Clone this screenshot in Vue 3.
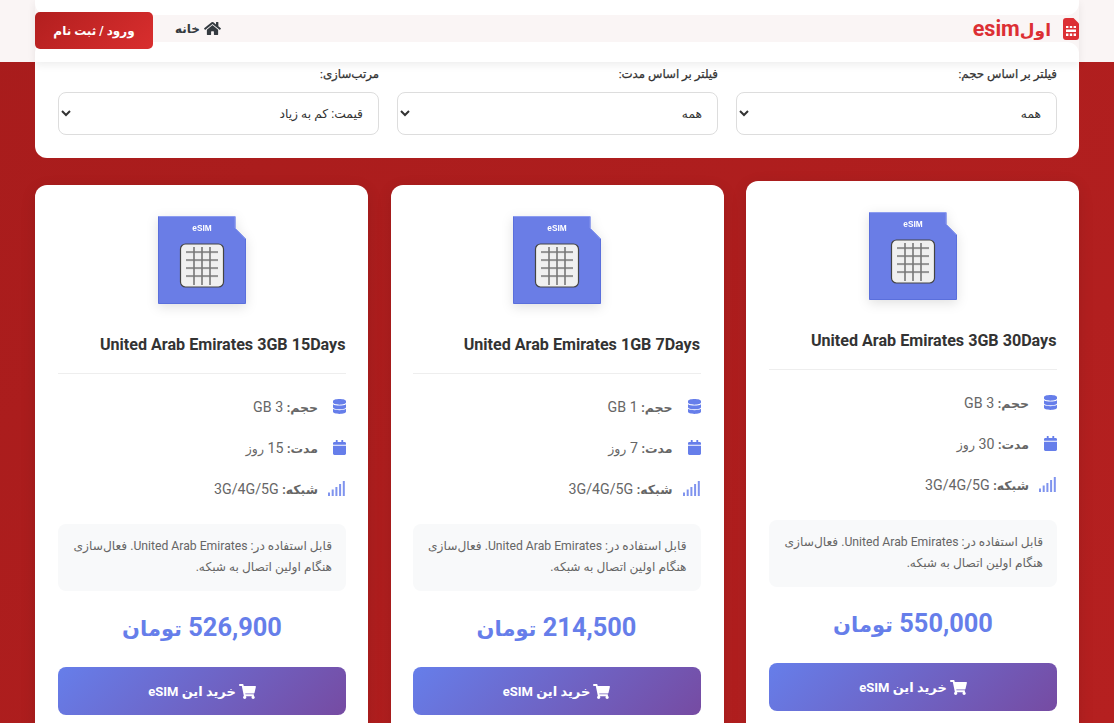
<script setup>
const filters = [
  { label: 'فیلتر بر اساس حجم:', value: 'همه' },
  { label: 'فیلتر بر اساس مدت:', value: 'همه' },
  { label: 'مرتب‌سازی:', value: 'قیمت: کم به زیاد' }
]
const cards = [
  { title: 'United Arab Emirates 3GB 30Days', gb: 3, days: 30, price: '550,000', lifted: true },
  { title: 'United Arab Emirates 1GB 7Days', gb: 1, days: 7, price: '214,500' },
  { title: 'United Arab Emirates 3GB 15Days', gb: 3, days: 15, price: '526,900' }
]
const hLines = [36, 44, 52, 60]
const vLines = [36, 44, 52]
const bars = [
  { x: 0, h: 3.5 },
  { x: 3.7, h: 6.5 },
  { x: 7.4, h: 9 },
  { x: 11.1, h: 12 },
  { x: 14.8, h: 15 }
]
</script>

<template>
  <div class="page">
    <header class="header">
      <div class="nav">
        <div class="brand">
          <svg class="sim" viewBox="0 0 16 22" aria-hidden="true">
            <path fill="#dc2f34" d="M3 0h7.5L16 5.5V19a3 3 0 0 1-3 3H3a3 3 0 0 1-3-3V3a3 3 0 0 1 3-3z"/>
            <g fill="#fff">
              <rect x="3" y="8" width="2.4" height="2"/><rect x="6.8" y="8" width="2.4" height="2"/><rect x="10.6" y="8" width="2.4" height="2"/>
              <rect x="3" y="11.5" width="10" height="2.5"/>
              <rect x="3" y="15.5" width="2.4" height="2.5"/><rect x="6.8" y="15.5" width="2.4" height="2.5"/><rect x="10.6" y="15.5" width="2.4" height="2.5"/>
            </g>
          </svg>
          <span class="brand-name"><span class="fa">اول</span>esim</span>
        </div>
        <div class="nav-end">
          <a class="home">
            <svg viewBox="0 0 576 512" aria-hidden="true"><path fill="#343a40" d="M280.37 148.26L96 300.11V464a16 16 0 0 0 16 16l112.06-.29a16 16 0 0 0 15.92-16V368a16 16 0 0 1 16-16h64a16 16 0 0 1 16 16v95.64a16 16 0 0 0 16 16.05L464 480a16 16 0 0 0 16-16V300L295.67 148.26a12.19 12.19 0 0 0-15.3 0zM571.6 251.47L488 182.56V44.05a12 12 0 0 0-12-12h-56a12 12 0 0 0-12 12v72.61L318.47 43a48 48 0 0 0-61 0L4.34 251.47a12 12 0 0 0-1.6 16.9l25.5 31A12 12 0 0 0 45.15 301l235.22-193.74a12.19 12.19 0 0 1 15.3 0L530.9 301a12 12 0 0 0 16.9-1.6l25.5-31a12 12 0 0 0-1.7-16.93z"/></svg>
            <span>خانه</span>
          </a>
          <button class="login">ورود / ثبت نام</button>
        </div>
      </div>
    </header>

    <main class="main">
      <section class="filters">
        <label v-for="f in filters" :key="f.label" class="filter">
          <span>{{ f.label }}</span>
          <select><option>{{ f.value }}</option></select>
        </label>
      </section>

      <section class="cards">
        <article v-for="c in cards" :key="c.title" class="card" :class="{ lifted: c.lifted }">
          <svg class="esim" viewBox="0 0 88 88" aria-hidden="true">
            <path d="M.5 .5H77V12L87.5 23V87.5H.5Z" fill="#6a7de6" stroke="#5a6fdc" stroke-width="1"/>
            <path d="M.5 .5H77V12L87.5 23" fill="none" stroke="#8c9cf0" stroke-width="1"/>
            <text x="44" y="15" text-anchor="middle" class="esim-label">eSIM</text>
            <rect x="22.5" y="28" width="43" height="43" rx="5" fill="#f0f0f0" stroke="#444" stroke-width="1.2"/>
            <g stroke="#ddd" stroke-width="1">
              <line v-for="y in hLines" :key="'s' + y" x1="28" x2="60" :y1="y + 1" :y2="y + 1"/>
            </g>
            <g stroke="#444" stroke-width="1">
              <line v-for="y in hLines" :key="'h' + y" x1="28" x2="60" :y1="y" :y2="y"/>
            </g>
            <g stroke="#777" stroke-width="1.6">
              <line v-for="x in vLines" :key="'v' + x" y1="31" y2="69" :x1="x" :x2="x"/>
            </g>
          </svg>
          <h3 class="title">{{ c.title }}</h3>
          <ul class="specs">
            <li>
              <span class="cell"><svg viewBox="0 0 448 512" class="ico"><path fill="#667eea" d="M448 73.143v45.714C448 159.143 347.667 192 224 192S0 159.143 0 118.857V73.143C0 32.857 100.333 0 224 0s224 32.857 224 73.143zM448 176v102.857C448 319.143 347.667 352 224 352S0 319.143 0 278.857V176c48.125 33.143 136.208 48.572 224 48.572S399.874 209.143 448 176zm0 160v102.857C448 479.143 347.667 512 224 512S0 479.143 0 438.857V336c48.125 33.143 136.208 48.572 224 48.572S399.874 369.143 448 336z"/></svg></span>
              <span><b>حجم:</b> {{ c.gb }} GB</span>
            </li>
            <li>
              <span class="cell"><svg viewBox="0 0 448 512" class="ico"><path fill="#667eea" d="M12 192h424c6.6 0 12 5.4 12 12v260c0 26.5-21.5 48-48 48H48c-26.5 0-48-21.5-48-48V204c0-6.6 5.4-12 12-12zm436-44v-36c0-26.5-21.5-48-48-48h-48V12c0-6.6-5.4-12-12-12h-40c-6.6 0-12 5.4-12 12v52H160V12c0-6.6-5.4-12-12-12h-40c-6.6 0-12 5.4-12 12v52H48C21.5 64 0 85.5 0 112v36c0 6.6 5.4 12 12 12h424c6.6 0 12-5.4 12-12z"/></svg></span>
              <span><b>مدت:</b> {{ c.days }} <small>روز</small></span>
            </li>
            <li>
              <span class="cell cell-signal"><svg viewBox="0 0 17 15" class="ico signal"><rect v-for="b in bars" :key="b.x" :x="b.x" :y="15 - b.h" width="2" :height="b.h" fill="#7f93ee"/></svg></span>
              <span><b>شبکه:</b> 3G/4G/5G</span>
            </li>
          </ul>
          <p class="note">قابل استفاده در: United Arab Emirates. فعال‌سازی هنگام اولین اتصال به شبکه.</p>
          <div class="price">{{ c.price }} <span class="fa">تومان</span></div>
          <button class="buy">
            <svg viewBox="0 0 576 512"><path fill="#fff" d="M528.12 301.319l47.273-208C578.806 78.301 567.391 64 551.99 64H159.208l-9.166-44.81C147.758 8.021 137.93 0 126.529 0H24C10.745 0 0 10.745 0 24v16c0 13.255 10.745 24 24 24h69.883l70.248 343.435C147.325 417.1 136 435.222 136 456c0 30.928 25.072 56 56 56s56-25.072 56-56c0-15.674-6.447-29.835-16.824-40h209.647C430.447 426.165 424 440.326 424 456c0 30.928 25.072 56 56 56s56-25.072 56-56c0-22.172-12.888-41.332-31.579-50.405l5.517-24.276c3.413-15.018-8.002-29.319-23.403-29.319H218.117l-6.545-32h293.145c11.206 0 20.92-7.754 23.403-18.681z"/></svg>
            <span>خرید این eSIM</span>
          </button>
        </article>
      </section>
    </main>
  </div>
</template>

<style>
html, body { margin: 0; height: 100%; overflow: hidden; }
</style>

<style scoped>
* { box-sizing: border-box; }
.page {
  direction: rtl;
  height: 723px;
  overflow: hidden;
  background: linear-gradient(135deg, #a81c1c, #b52020);
  font-family: Roboto, "DejaVu Sans", sans-serif;
  color: #333;
}
.header {
  position: relative;
  z-index: 2;
  height: 62px;
  padding: 0 35px;
  background: #faf5f5;
}
.nav {
  position: relative;
  height: 62px;
  display: flex;
  justify-content: space-between;
  align-items: flex-start;
  box-shadow: 0 3px 8px rgba(0, 0, 0, .07);
}
.nav::before,
.nav::after {
  content: "";
  position: absolute;
  left: 0;
  right: 0;
  background: #fff;
}
.nav::before { top: 0; height: 15px; border-radius: 0 0 12px 12px; }
.nav::after { top: 42px; bottom: 0; border-radius: 12px 12px 0 0; }
.brand {
  position: relative;
  z-index: 1;
  display: flex;
  align-items: center;
  gap: 12px;
  margin-top: 16px;
  color: #dc2f34;
  font-size: 21.6px;
  font-weight: 700;
}
.brand-name .fa { font-size: 17px; }
.sim { width: 16px; height: 22px; }
.nav-end {
  position: relative;
  z-index: 1;
  display: flex;
  align-items: flex-start;
  gap: 22px;
  margin-top: 12px;
}
.home {
  display: flex;
  align-items: center;
  gap: 4px;
  margin-top: 9px;
  font-size: 12px;
  font-weight: 700;
  color: #343a40;
}
.home svg { width: 17px; height: 15px; }
.login {
  width: 118px;
  height: 37px;
  border: 0;
  border-radius: 5px;
  color: #fff;
  font: 700 12px Roboto, "DejaVu Sans", sans-serif;
  background: linear-gradient(135deg, #b21f1f, #d92e2e);
}
.main { padding: 0 35px; }
.filters {
  display: grid;
  grid-template-columns: repeat(3, 321px);
  gap: 18px;
  height: 96px;
  padding: 4px 22px 0 23px;
  background: #fff;
  border-radius: 0 0 12px 12px;
}
.filter {
  display: flex;
  flex-direction: column;
  gap: 10px;
  font-size: 11.8px;
  -webkit-text-stroke: .25px #333;
  color: #333;
}
.filter span { line-height: 16px; }
.filter select {
  height: 43px;
  padding: 0 11px;
  border: 1px solid #ddd;
  border-radius: 8px;
  background: #fff;
  color: #333;
  -webkit-text-stroke: 0;
  font: 400 12.3px Roboto, "DejaVu Sans", sans-serif;
}
.cards {
  display: grid;
  grid-template-columns: repeat(3, 333px);
  justify-content: space-between;
  margin-top: 27px;
}
.card {
  height: 600px;
  padding: 27px 22px 0 23px;
  background: #fff;
  border-radius: 12px;
  box-shadow: 0 4px 16px rgba(0, 0, 0, .1);
  display: flex;
  flex-direction: column;
}
.card:nth-child(2) { padding-left: 22px; padding-right: 23px; }
.card.lifted { transform: translateY(-4px); }
.esim {
  display: block;
  align-self: center;
  width: 88px;
  height: 88px;
  margin-top: 4px;
  flex: none;
  filter: drop-shadow(0 3px 6px rgba(0, 0, 0, .12));
}
.esim-label {
  font: 700 8.3px "Liberation Sans", sans-serif;
  fill: #fff;
}
.title {
  margin: 31px 0 0;
  padding: 0 .5px 18px 0;
  border-bottom: 1px solid #eee;
  font-size: 16.13px;
  line-height: 20px;
  font-weight: 700;
  color: #333;
  text-align: right;
}
.specs { list-style: none; margin: 12px 0 0; padding: 0; }
.specs li {
  height: 41px;
  display: flex;
  align-items: center;
  font-size: 14.2px;
  color: #666;
}
.specs b { font-size: 12.5px; color: #666; }
.specs small { font-size: 12.5px; }
.cell {
  width: 28px;
  flex: none;
  display: flex;
}
.ico { width: 13px; height: 15px; }
.signal { width: 17px; margin-right: 1px; }
.note {
  margin: 15px 0 0;
  padding: 12px 14px 10px 8px;
  height: 67px;
  background: #f8f9fa;
  border-radius: 8px;
  font-size: 12.2px;
  line-height: 21px;
  color: #666;
  text-align: right;
}
.price {
  margin-top: 16px;
  font-size: 25.4px;
  line-height: 40px;
  font-weight: 700;
  color: #667eea;
  text-align: center;
}
.price .fa { font-size: 21px; }
.buy {
  margin-top: 18px;
  height: 48px;
  border: 0;
  border-radius: 8px;
  background: linear-gradient(135deg, #667eea, #764ba2);
  color: #fff;
  font: 700 13px Roboto, "DejaVu Sans", sans-serif;
  display: flex;
  align-items: center;
  justify-content: center;
  gap: 3px;
  flex: none;
}
.buy svg { width: 17px; height: 15px; }
</style>
